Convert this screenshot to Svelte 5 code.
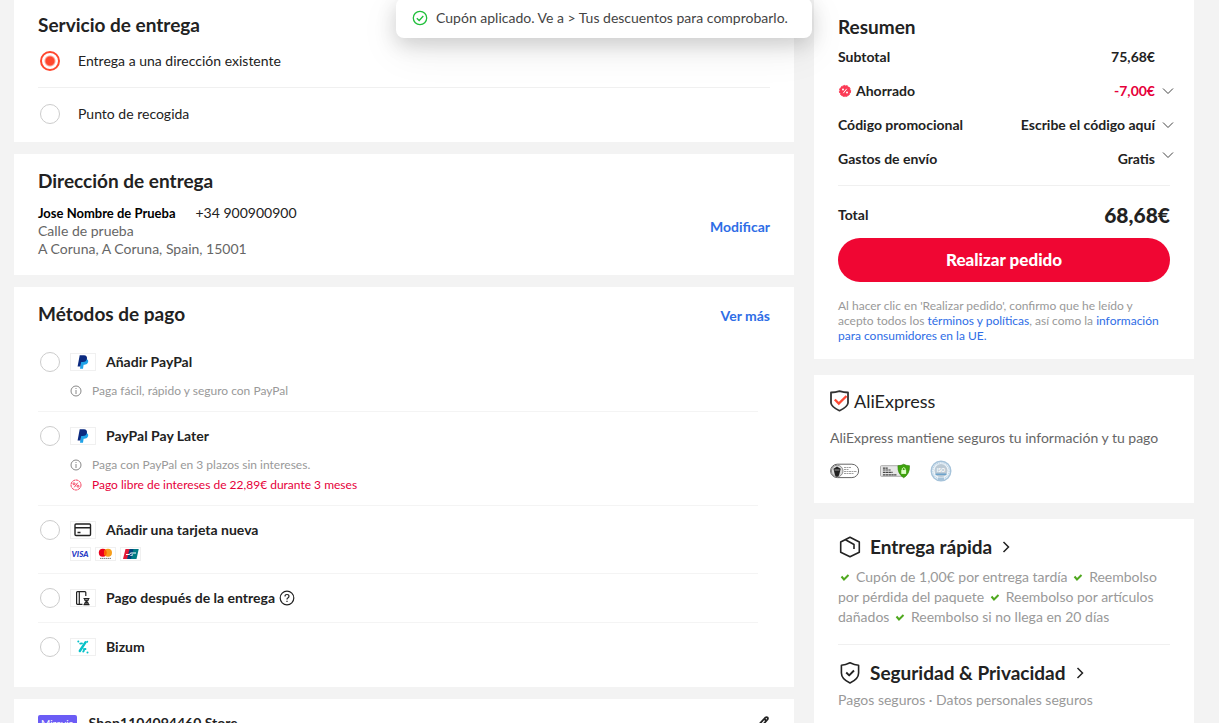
<script lang="ts">
  type Note = { kind: "info" | "promo"; text: string };
  type Method = { id: string; icon: string; name: string; notes?: Note[]; brands?: string[]; help?: boolean };

  let delivery = $state("address");
  let payment = $state("");

  const DELIVERY = [
    { id: "address", label: "Entrega a una dirección existente" },
    { id: "pickup", label: "Punto de recogida" },
  ];

  const METHODS: Method[] = [
    {
      id: "paypal", icon: "paypal", name: "Añadir PayPal",
      notes: [{ kind: "info", text: "Paga fácil, rápido y seguro con PayPal" }],
    },
    {
      id: "paylater", icon: "paypal", name: "PayPal Pay Later",
      notes: [
        { kind: "info", text: "Paga con PayPal en 3 plazos sin intereses." },
        { kind: "promo", text: "Pago libre de intereses de 22,89€ durante 3 meses" },
      ],
    },
    { id: "card", icon: "card", name: "Añadir una tarjeta nueva", brands: ["visa", "mastercard", "unionpay"] },
    { id: "after", icon: "after", name: "Pago después de la entrega", help: true },
    { id: "bizum", icon: "bizum", name: "Bizum" },
  ];

  const PERKS = [
    "Cupón de 1,00€ por entrega tardía",
    "Reembolso por pérdida del paquete",
    "Reembolso por artículos dañados",
    "Reembolso si no llega en 20 días",
  ];
</script>

{#snippet chevron()}
  <svg class="chevron" viewBox="0 0 12 12" aria-hidden="true"><path d="M1 3.5 6 8.5 11 3.5" /></svg>
{/snippet}

{#snippet arrow()}
  <svg class="arrow" viewBox="0 0 12 12" aria-hidden="true"><path d="M3.5 1 8.5 6 3.5 11" /></svg>
{/snippet}

{#snippet methodIcon(icon: string)}
  <span class="method-icon">
    {#if icon === "paypal"}
      <svg width="12" height="14" viewBox="0 0 12 14">
        <path fill="#1fa3e8" d="M4.2 4H9.700q2 .8 1.500 3-.6 2.600-3.600 2.800H6.600L6 13.700H3z" />
        <path fill="#0b2a80" d="M2.700 .3H7q3.300 .2 3 3.200-.5 3.500-4.300 3.600H4.200L3.400 11.600H.6z" />
      </svg>
    {:else if icon === "card"}
      <svg width="18" height="14" viewBox="0 0 18 14" fill="none" stroke="#222" stroke-width="1.400">
        <rect x="1" y="1" width="15.500" height="11.500" rx="1" />
        <path d="M1 4.800h15.500M3.500 9.500h3" />
      </svg>
    {:else if icon === "after"}
      <svg width="16" height="16" viewBox="0 0 16 16" fill="none" stroke="#222" stroke-width="1.200">
        <path d="M7.500 14.300H2.500q-.9 0-.9-1V2.600q0-1 .9-1h7.400q.9 0 .9 1V6M4.300 1.600v12.700" />
        <path d="M8.500 8.500h6M8.500 14.600h6M9.500 8.700q0 1.800 2 2.900 2-1.100 2-2.900M9.500 14.500q0-1.800 2-2.900 2 1.100 2 2.900" />
        <path d="M10 13.800h3l-1.500-2zM10 9.500h3l-1.500 1.700z" fill="#222" stroke="none" />
      </svg>
    {:else}
      <svg width="12" height="14" viewBox="0 0 12 14" fill="none" stroke="#05c1c8" stroke-linecap="round">
        <path stroke-width="2.400" d="M8.600 2.200 2.800 11" />
        <path stroke-width="1.800" d="M3.200 3.600 5 3.300M6.700 9.200l1.800-.2M10.200 1.800l.1-.1M6.200 11.500 7 10.700" />
        <path stroke-width="2" d="M1.300 1.400v0M10.500 12.500v0" />
      </svg>
    {/if}
  </span>
{/snippet}

{#snippet brandIcon(brand: string)}
  <span class="brand">
    {#if brand === "visa"}
      <svg width="19" height="12" viewBox="0 0 19 12" role="img" aria-label="Visa">
        <text class="visa" x="9" y="9" text-anchor="middle">VISA</text>
      </svg>
    {:else if brand === "mastercard"}
      <svg width="19" height="12" viewBox="0 0 19 12" role="img" aria-label="Mastercard">
        <circle cx="6.800" cy="4.800" r="4" fill="#eb001b" />
        <circle cx="12" cy="4.800" r="4" fill="#f79e1b" />
        <path d="M9.400 1.800a4 4 0 0 1 0 6 4 4 0 0 1 0-6z" fill="#ff5f00" />
        <path d="M4 10.400h11" stroke="#777" stroke-width="1" stroke-dasharray="1.500 .5" />
      </svg>
    {:else}
      <svg width="19" height="12" viewBox="0 0 19 12" role="img" aria-label="UnionPay">
        <path fill="#e21836" d="M4.500 1H9L6.500 11H2z" />
        <path fill="#00447c" d="M8.500 1h5L11 11H6z" />
        <path fill="#007b84" d="M12.500 1h5.200L15.500 11H10z" />
        <path fill="none" stroke="#fff" stroke-width="1" d="M5 6.500h3.500L9.500 5h5.500M9.500 7.500 12 6.800" />
      </svg>
    {/if}
  </span>
{/snippet}

<div class="screen">
  <div class="checkout">
    <div class="toast-wrap">
      <div class="toast" role="status">
        <svg width="16" height="16" viewBox="0 0 16 16" fill="none" stroke="#1fbf3a" stroke-width="1.300" aria-hidden="true">
          <circle cx="8" cy="8" r="6.700" />
          <path d="M4.800 8.200 7.200 10.500 11.300 6" />
        </svg>
        <span>Cupón aplicado. Ve a &gt; Tus descuentos para comprobarlo.</span>
      </div>
    </div>

    <main>
      <!-- Delivery service -->
      <section class="card delivery">
        <h2>Servicio de entrega</h2>
        {#each DELIVERY as d}
          <label class="delivery-option">
            <input type="radio" name="delivery" value={d.id} bind:group={delivery} />
            <span>{d.label}</span>
          </label>
        {/each}
      </section>

      <!-- Address -->
      <section class="card">
        <h2>Dirección de entrega</h2>
        <div class="address">
          <address>
            <div class="contact"><strong>Jose Nombre de Prueba</strong><span>+34 900900900</span></div>
            <div>Calle de prueba</div>
            <div>A Coruna, A Coruna, Spain, 15001</div>
          </address>
          <button class="text-btn">Modificar</button>
        </div>
      </section>

      <!-- Payment -->
      <section class="card payment">
        <div class="card-head">
          <h2>Métodos de pago</h2>
          <button class="text-btn">Ver más</button>
        </div>
        {#each METHODS as m}
          <div class="method" class:with-details={m.notes || m.brands}>
            <div class="method-row">
              <label>
                <input type="radio" name="payment" value={m.id} bind:group={payment} />
                {@render methodIcon(m.icon)}
                <span>{m.name}</span>
              </label>
              {#if m.help}
                <button class="help" aria-label="Ayuda">
                  <svg width="16" height="16" viewBox="0 0 16 16" fill="none" stroke="#222" stroke-width="1.200">
                    <circle cx="8" cy="8" r="6.800" />
                    <path d="M6 6.500Q6 4.500 8 4.500t2 1.800Q10 7.300 8.800 8 8 8.400 8 9.500M8 10.700v1.300" />
                  </svg>
                </button>
              {/if}
            </div>
            {#if m.notes}
              <div class="notes">
                {#each m.notes as n}
                  <div class="note {n.kind}">
                    {#if n.kind === "info"}
                      <svg width="12" height="12" viewBox="0 0 12 12" fill="none" stroke="#888" aria-hidden="true">
                        <circle cx="6" cy="6" r="5" /><path d="M6 5v4M6 3v1" />
                      </svg>
                    {:else}
                      <svg width="12" height="12" viewBox="0 0 12 12" fill="none" stroke="#f5425f" aria-hidden="true">
                        <circle cx="6" cy="6" r="5" stroke-dasharray="2.800 .4" />
                        <path d="M4.300 8.300 7.700 3.700" />
                        <circle cx="4" cy="4.800" r="1" /><circle cx="8" cy="7.200" r="1" />
                      </svg>
                    {/if}
                    <span>{n.text}</span>
                  </div>
                {/each}
              </div>
            {/if}
            {#if m.brands}
              <div class="brands">
                {#each m.brands as b}{@render brandIcon(b)}{/each}
              </div>
            {/if}
          </div>
        {/each}
      </section>

      <!-- Store -->
      <section class="card store">
        <span class="store-badge">Miravia</span>
        <span class="store-name">Shop1104094460 Store</span>
        <button class="edit" aria-label="Editar">
          <svg width="16" height="16" viewBox="0 0 16 16" fill="none" stroke="#222" stroke-width="1.800">
            <path d="M3 14l1-3.500 7.500-8q1.200-.8 2 0t0 2L6 13zM10.500 4 12 5.500" />
          </svg>
        </button>
      </section>
    </main>

    <aside>
      <!-- Summary -->
      <section class="card summary">
        <h2>Resumen</h2>
        <div class="sum-row"><span class="key">Subtotal</span><span>75,68€</span><i class="slot"></i></div>
        <button class="sum-row">
          <span class="key">
            <svg width="14" height="14" viewBox="0 0 14 14" aria-hidden="true">
              <circle cx="7" cy="7" r="5.500" fill="#fb3a55" />
              <circle cx="7" cy="7" r="5.600" fill="none" stroke="#fb3a55" stroke-dasharray="2 1" />
              <path d="M5.300 9.200 8.700 4.800" stroke="#fff" />
              <circle cx="5" cy="5.500" r="1" fill="#fff" /><circle cx="9" cy="8.500" r="1" fill="#fff" />
            </svg>
            Ahorrado
          </span>
          <span class="saved">-7,00€</span>
          {@render chevron()}
        </button>
        <button class="sum-row"><span class="key">Código promocional</span><span>Escribe el código aquí</span>{@render chevron()}</button>
        <button class="sum-row shipping"><span class="key">Gastos de envío</span><span>Gratis</span>{@render chevron()}</button>

        <div class="total"><span>Total</span><strong>68,68€</strong></div>
        <button class="order">Realizar pedido</button>
        <p class="legal">
          Al hacer clic en 'Realizar pedido', confirmo que he leído y acepto todos los
          <a href="#terminos">términos y políticas</a>, así como la <a href="#consumidores">información para consumidores en la UE.</a>
        </p>
      </section>

      <!-- Trust badges -->
      <section class="card trust">
        <div class="logo">
          <svg width="20" height="22" viewBox="0 0 20 22" fill="none" aria-hidden="true">
            <path d="M1 2.500Q5.500 2.500 9.500 1.200 14 2.500 18 2.500V13Q17.500 17 9.500 20.700 1.500 17 1 13z" stroke="#333" stroke-width="1.800" stroke-linejoin="round" />
            <path d="M4.800 9.500 8.800 13.500 16.500 6" stroke="#fd4a35" stroke-width="2.400" />
          </svg>
          <span>AliExpress</span>
        </div>
        <p>AliExpress mantiene seguros tu información y tu pago</p>
        <div class="seals">
          <svg width="30" height="16" viewBox="0 0 30 16" aria-hidden="true">
            <rect x=".6" y="1.200" width="28" height="13.400" rx="6.700" fill="#fff" stroke="#666" />
            <circle cx="7.200" cy="8" r="5.800" fill="#ddd" stroke="#777" stroke-width=".8" />
            <path d="M3.500 5.800 7 3.500l3.700 2.300L9 12.500 7 14l-2-1.500z" fill="#222" />
            <path d="M4.500 7h5" stroke="#999" />
            <path d="M14 4.500h7M14 6.500h5M14 8.500h13M14 10.500h10" stroke="#888" stroke-width=".8" stroke-dasharray="2 .5" />
          </svg>
          <svg width="30" height="16" viewBox="0 0 31 16" aria-hidden="true">
            <rect x=".5" y="2.500" width="26" height="11" rx="1" fill="#e6e6e6" stroke="#aaa" />
            <path d="M3 5h5M3 7h8M3 9.500h10M3 12h14" stroke="#444" stroke-width="1.200" stroke-dasharray="2.500 .4" />
            <path d="M18.500 2.500Q22 2.500 24.500 1q2.500 1.500 6 1.500Q31 11 24.500 15 18 11 18.500 2.500z" fill="#3fa30d" stroke="#2b8006" stroke-width=".6" />
            <rect x="22" y="7" width="5" height="4" fill="#dfffc9" />
            <path d="M23 7V5.500q1.500-2 3 0V7" fill="none" stroke="#dfffc9" />
          </svg>
          <svg width="22" height="22" viewBox="0 0 22 22" aria-hidden="true">
            <circle cx="11" cy="11" r="9.800" fill="#eef5fa" stroke="#a6c3da" stroke-width="1.400" />
            <circle cx="11" cy="11" r="8.200" fill="none" stroke="#bcd2e3" stroke-width="1.200" stroke-dasharray="1.200 .7" />
            <circle cx="11" cy="10.600" r="6.500" fill="#bccad5" />
            <text class="iso" x="11" y="12" text-anchor="middle">ISO</text>
            <path d="M5.500 14.300h11" stroke="#6da3cb" stroke-width="1.600" />
            <path d="M8 17.500h6v3H8z" fill="#a6c3da" />
          </svg>
        </div>
      </section>

      <!-- Guarantees -->
      <section class="card guarantees">
        <a class="promise" href="#entrega">
          <svg width="24" height="24" viewBox="0 0 24 24" fill="none" stroke="#222" stroke-width="1.600" stroke-linejoin="round" aria-hidden="true">
            <path d="M12 2.200 21.300 7v10.200L12 21.800 2.700 17.200V7z" />
            <path d="M7.500 4.700 16 9.500V14" />
          </svg>
          <span>Entrega rápida</span>
          {@render arrow()}
        </a>
        <p class="perks">
          {#each PERKS as perk}
            <svg class="tick" viewBox="0 0 14 10" aria-hidden="true"><path d="M3.500 4.500 6 7.500 10.500 3" /></svg>
            {perk + " "}
          {/each}
        </p>
        <hr />
        <a class="promise" href="#seguridad">
          <svg width="24" height="24" viewBox="0 0 24 24" fill="none" stroke="#222" stroke-width="1.600" stroke-linejoin="round" aria-hidden="true">
            <path d="M12 1.800Q16.500 4.200 20.600 4.200V12Q20.600 18 12 22 3.400 18 3.400 12V4.200Q7.500 4.200 12 1.800z" />
            <path d="M8.200 11.500 11.200 14.400 16 9.500" stroke-width="1.900" />
          </svg>
          <span>Seguridad &amp; Privacidad</span>
          {@render arrow()}
        </a>
        <p class="safety">Pagos seguros · Datos personales seguros</p>
      </section>
    </aside>
  </div>
</div>

<style>
  :global(body) { background: #f3f3f3; }

  .screen {
    height: 100vh;
    overflow-y: auto;
    scrollbar-width: none;
    font-family: Lato, "Open Sans", sans-serif;
    font-size: 14px;
    line-height: 20px;
    color: #222;
  }
  .checkout {
    position: relative;
    display: grid;
    grid-template-columns: minmax(0, 1fr) 380px;
    gap: 20px;
    margin: 0 25px 0 14px;
  }
  main { display: flex; flex-direction: column; gap: 12px; }
  aside { display: flex; flex-direction: column; gap: 16px; }

  h2, p { margin: 0; }
  h2 { font-size: 19px; line-height: 24px; font-weight: 700; }
  button { font: inherit; color: inherit; background: none; border: 0; padding: 0; cursor: pointer; }
  a { color: #2e6de6; text-decoration: none; }
  .card { background: #fff; padding: 15px 24px 17px; }

  /* Toast */
  .toast-wrap {
    position: absolute; top: -2px; left: 0; right: 0; z-index: 1;
    display: flex; justify-content: center;
    pointer-events: none;
  }
  .toast {
    display: flex; align-items: center; gap: 8px;
    padding: 10px 24px 10px 16px;
    background: #fff; border-radius: 8px;
    box-shadow: 0 6px 20px rgba(0,0,0,.16), 0 12px 40px rgba(0,0,0,.08);
    color: #444;
  }

  /* Radios */
  input[type="radio"] {
    appearance: none;
    box-sizing: border-box;
    width: 20px; height: 20px; margin: 0;
    border: 1px solid #ccc; border-radius: 50%;
    background: #fff; flex-shrink: 0; cursor: pointer;
  }
  input[type="radio"]:checked {
    border: 2px solid #ff472e;
    background: radial-gradient(circle, #ff472e 4px, #fff 6px);
  }

  /* Delivery service */
  .delivery { padding: 13px 24px 2px; }
  .delivery-option {
    display: flex; align-items: center; gap: 18px;
    padding: 16px 2px;
  }
  .delivery h2 + .delivery-option { padding-top: 14px; }
  .delivery-option + .delivery-option { border-top: 1px solid #f0f0f0; }

  /* Address */
  .address { display: flex; align-items: center; justify-content: space-between; margin-top: 11px; }
  address { font-style: normal; line-height: 18px; color: #666; }
  .contact { display: flex; gap: 20px; color: #222; }
  .contact strong { font-size: 13px; color: #000; }
  .text-btn { color: #2e6de6; font-weight: 700; }
  .address .text-btn { margin-bottom: 8px; }

  /* Payment */
  .payment { padding-bottom: 16px; }
  .card-head { display: flex; align-items: flex-end; justify-content: space-between; margin-bottom: 12px; }
  .method { margin-right: 12px; padding: 14px 0; border-bottom: 1px solid #f4f4f4; }
  .method:last-child { border-bottom: 0; }
  .method.with-details { padding-bottom: 10px; }
  .method-row { display: flex; align-items: center; gap: 4px; padding-left: 2px; font-weight: 700; }
  .method-row label { display: flex; align-items: center; gap: 10px; }
  .method-icon {
    display: flex; align-items: center; justify-content: center;
    width: 24px; height: 16px; border: 1px solid #f0f0f0;
  }
  .help { display: flex; }
  .notes { margin-top: 9px; padding-left: 32px; font-size: 12px; color: #999; }
  .note { display: flex; align-items: center; gap: 10px; }
  .note.promo { color: #e6003a; }
  .brands { display: flex; gap: 4px; margin-top: 7px; padding: 0 0 2px 32px; }
  .brand { display: flex; border: 1px solid #f0f0f0; }
  .visa { font: italic 900 8px Lato, sans-serif; fill: #2536c4; }

  /* Store */
  .store { display: flex; align-items: center; gap: 12px; padding: 14px 24px; font-weight: 700; }
  .store-badge {
    padding: 0 3px; border-radius: 2px;
    background: #6b5cf5; color: #fff;
    font-size: 10px; line-height: 16px; font-weight: 400;
  }
  .edit { display: flex; margin-left: auto; }

  /* Summary */
  .summary { padding-bottom: 16px; }
  .sum-row {
    display: flex; align-items: center; gap: 7px;
    width: calc(100% + 4px); height: 34px; font-weight: 700;
  }
  .summary h2 + .sum-row { margin-top: 1px; }
  .key { display: flex; align-items: center; gap: 4px; margin-right: auto; }
  .saved { color: #e6003a; }
  .slot, .chevron { width: 12px; height: 12px; flex-shrink: 0; }
  .chevron { fill: none; stroke: #444; }
  .shipping .chevron { align-self: flex-start; margin-top: 7px; }
  .total {
    display: flex; align-items: center; justify-content: space-between;
    margin-top: 9px; padding: 16px 0 10px;
    border-top: 1px solid #f0f0f0;
    line-height: 26px; font-weight: 700;
  }
  .total strong { font-size: 21px; font-weight: 900; }
  .order {
    display: block; width: 100%; height: 44px;
    border-radius: 22px; background: #f00633; color: #fff;
    font-size: 17px; font-weight: 900;
  }
  .legal { margin-top: 16px; font-size: 12px; line-height: 15px; color: #999; }

  /* Trust badges */
  .trust { padding: 13px 16px 21px; }
  .logo { display: flex; align-items: center; gap: 4px; font-size: 18px; line-height: 26px; }
  .trust p { margin-top: 14px; color: #666; }
  .seals { display: flex; align-items: center; gap: 20px; margin-top: 12px; }
  .iso { font: 700 5px Lato, sans-serif; fill: #fff; }

  /* Guarantees */
  .guarantees { padding: 16px 24px; color: #999; }
  .promise {
    display: flex; align-items: center; gap: 8px;
    font-size: 19px; line-height: 24px; font-weight: 700; color: #222;
  }
  .arrow { width: 12px; height: 12px; fill: none; stroke: #222; stroke-width: 1.5; }
  .perks { margin-top: 8px; }
  .tick { width: 14px; height: 10px; margin-right: 4px; fill: none; stroke: #4fa81e; stroke-width: 2; }
  hr { margin: 17px 0 16px; border: 0; border-top: 1px solid #f0f0f0; }
  .safety { margin-top: 5px; }
</style>
